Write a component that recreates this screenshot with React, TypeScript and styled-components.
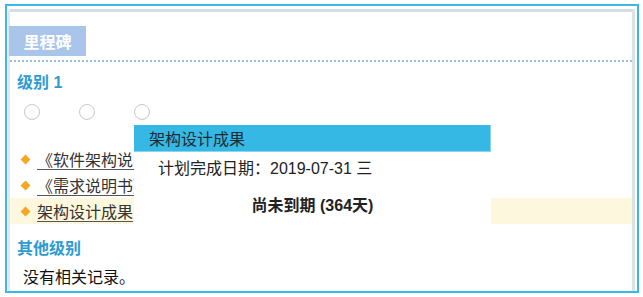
import React from "react";
import styled, { createGlobalStyle } from "styled-components";

const Global = createGlobalStyle`
  html, body { margin: 0; padding: 0; background: #fff; }
  body { font-family: "Liberation Sans", "Noto Sans CJK SC", sans-serif; color: #222; }
`;

const Frame = styled.div`
  box-sizing: border-box;
  margin: 4px 0 0 5px;
  width: 634px;
  height: 289px;
  border: 2px solid #38b9e8;
  padding: 3px 2px 0 1px;
  display: flex;
`;

const Panel = styled.div`
  position: relative;
  flex: 1;
  border-top: 3px solid #d4dde6;
  border-left: 2px solid #e3e8ee;
  border-right: 3px solid #dae1e8;
  border-top-left-radius: 3px;
  border-top-right-radius: 2px;
  display: flex;
  flex-direction: column;
`;

const TabBar = styled.div`
  margin-top: 14px;
  display: flex;
  border-bottom: 2px dotted #92bfdf;
  padding-bottom: 4px;
`;

const Tab = styled.div`
  width: 77px;
  height: 30px;
  margin-left: -1px;
  background: #a9c5e9;
  color: #fff;
  font-weight: bold;
  font-size: 16px;
  display: flex;
  align-items: center;
  justify-content: center;
`;

const Heading = styled.div<{ $top: number }>`
  margin-top: ${(p) => p.$top}px;
  padding-left: 7px;
  height: 22px;
  line-height: 22px;
  font-size: 16px;
  font-weight: bold;
  color: #2c9bd3;
`;

const RadioRow = styled.div`
  margin-top: 10px;
  padding-left: 14px;
  display: flex;
  gap: 39px;
`;

const Radio = styled.span`
  box-sizing: border-box;
  width: 16px;
  height: 16px;
  border-radius: 50%;
  border: 1.5px solid #c9c9c9;
  background: radial-gradient(circle at 50% 40%, #fff 55%, #f1f1f1 100%);
`;

const List = styled.div`
  margin-top: 26px;
  display: flex;
  flex-direction: column;
`;

const Row = styled.div<{ $active?: boolean }>`
  height: 26px;
  display: flex;
  align-items: center;
  padding-left: 11px;
  gap: 8px;
  background: ${(p) => (p.$active ? "#fdf7dd" : "transparent")};
  white-space: nowrap;
`;

const Diamond = styled.span`
  width: 7px;
  height: 7px;
  background: #f5a623;
  transform: rotate(45deg);
  margin-left: 1px;
  flex: none;
`;

const LinkText = styled.span`
  font-size: 16px;
  color: #333;
  text-decoration: underline;
  text-decoration-color: #555;
  text-underline-offset: 3px;
`;

const Empty = styled.div`
  margin-top: 7px;
  padding-left: 13px;
  height: 22px;
  line-height: 22px;
  font-size: 16px;
  color: #111;
`;

const Popup = styled.div`
  position: absolute;
  left: 124px;
  top: 113px;
  width: 357px;
  background: #fff;
  padding-bottom: 10px;
  z-index: 2;
`;

const PopupHeader = styled.div`
  box-sizing: border-box;
  height: 27px;
  background: #36b8e4;
  border-right: 1px solid #8ad4ef;
  border-bottom: 1px solid #8ad4ef;
  padding-left: 15px;
  display: flex;
  align-items: center;
  font-size: 16px;
  color: #1e2a33;
`;

const PopupLine = styled.div<{ $center?: boolean; $bold?: boolean; $top: number }>`
  margin-top: ${(p) => p.$top}px;
  height: 22px;
  line-height: 22px;
  font-size: 16px;
  color: #222;
  padding-left: ${(p) => (p.$center ? 0 : 24)}px;
  text-align: ${(p) => (p.$center ? "center" : "left")};
  font-weight: ${(p) => (p.$bold ? "bold" : "normal")};
`;

export default function App() {
  return (
    <>
      <Global />
      <Frame>
        <Panel>
          <TabBar>
            <Tab>里程碑</Tab>
          </TabBar>
          <Heading $top={10}>级别 1</Heading>
          <RadioRow>
            <Radio />
            <Radio />
            <Radio />
          </RadioRow>
          <List>
            <Row>
              <Diamond />
              <LinkText>《软件架构说明书》</LinkText>
            </Row>
            <Row>
              <Diamond />
              <LinkText>《需求说明书》</LinkText>
            </Row>
            <Row $active>
              <Diamond />
              <LinkText>架构设计成果</LinkText>
            </Row>
          </List>
          <Heading $top={14}>其他级别</Heading>
          <Empty>没有相关记录。</Empty>
          <Popup>
            <PopupHeader>架构设计成果</PopupHeader>
            <PopupLine $top={6}>计划完成日期：2019-07-31 三</PopupLine>
            <PopupLine $top={15} $center $bold>尚未到期 (364天)</PopupLine>
          </Popup>
        </Panel>
      </Frame>
    </>
  );
}
